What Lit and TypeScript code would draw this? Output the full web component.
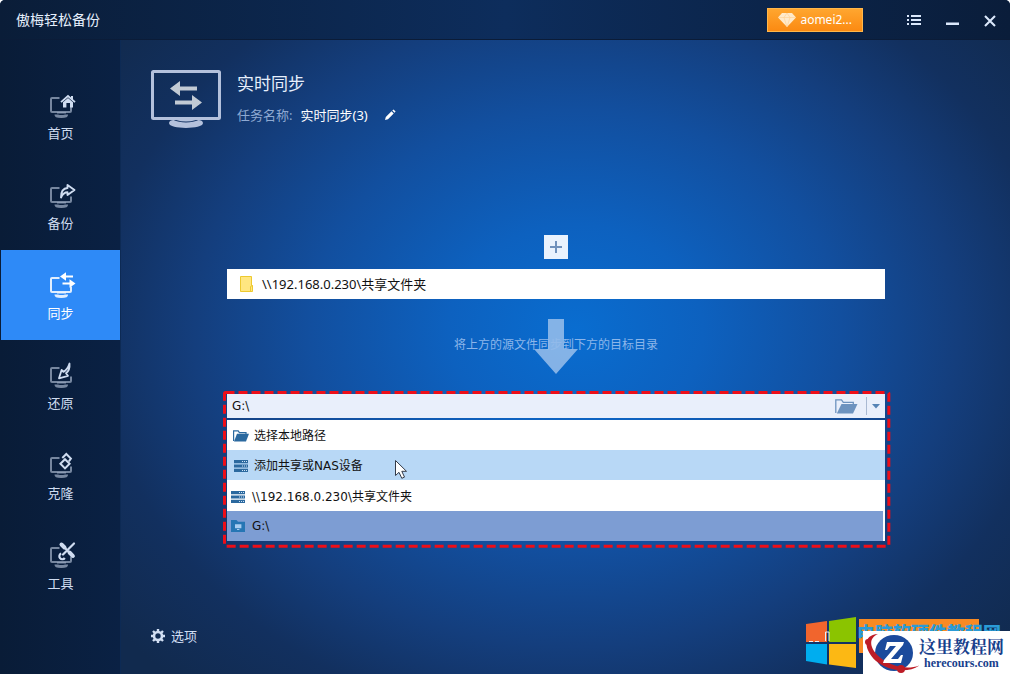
import { LitElement, html, css, svg } from "lit";
import { customElement, property, state } from "lit/decorators.js";
import { classMap } from "lit/directives/class-map.js";

const screen = svg`
  <path d="M10.500 3H3a1 1 0 0 0-1 1v12a1 1 0 0 0 1 1h18a1 1 0 0 0 1-1v-4.500" fill="none" stroke="currentColor" stroke-width="2" class="frame"/>
  <path class="frame" d="M5.500 19.500h3.500q3.500 1.200 7 0H19q.5 3.500-6.700 3.500t-6.800-3.500z" fill="currentColor"/>
  <path class="frame" d="M8 18h9" stroke="currentColor"/>`;

const glyphs: Record<string, unknown> = {
  home: svg`<path d="M12 7.200 19 1l7 6.200" fill="none" stroke="currentColor" stroke-width="1.800"/><path d="M22 1h2v4l-2-2z" fill="currentColor"/><path d="M14 7.300 19 3l5 4.300V12.500h-3V8h-3.600v4.500H14z" fill="currentColor"/>`,
  backup: svg`<path d="M12 12.500C12 6.500 14 3.300 18.500 3V0L25.500 5l-7 5V7.300c-3 0-4.800 1.500-6.500 5.200z" fill="none" stroke="currentColor" stroke-width="1.900" stroke-linejoin="round"/>`,
  sync: svg`<path d="M11 1.500l6-4.300v3.200h7v2.200h-7v3.200zM26.500 8.500l-6-4.300v3.200h-7v2.200h7v3.200z" fill="currentColor"/>`,
  restore: svg`<path d="M20.500-1.500c.5 5-.5 7.500-3.500 9.800l2 2.500-9 2.500 2.600-8.400 1.800 2c3-1.700 4.800-4.200 6.100-8.400z" fill="none" stroke="currentColor" stroke-width="1.800" stroke-linejoin="round"/>`,
  clone: svg`<path d="M16 4.200l4.600 4.600-4.600 4.600-4.600-4.600zM13.300 3 17.300-1l4.600 4.600-2 2.800" fill="none" stroke="currentColor" stroke-width="2"/>`,
  tools: svg`<path d="M12-1l12.500 12.500M25-1.500 14 9.500" fill="none" stroke="currentColor" stroke-width="2.200" stroke-linecap="round"/><path d="M12.500-.5l3 3M20.500 7.500l3.300 3.300" stroke="currentColor" stroke-width="4" stroke-linecap="round"/><path d="M15.800 13a3 3 0 1 1-3.600-4.500" fill="none" stroke="currentColor" stroke-width="2.200"/>`,
};

const server = html`<svg class="ico" width="14" height="12" viewBox="0 0 14 12" aria-hidden="true">
  <path d="M0 0h14v3.200H0zM0 4.400h14v3.200H0zM0 8.800h14V12H0z" fill="#2b699f"/>
  <path d="M8 1h1v1H8zM10 1h1v1h-1zM12 1h1v1h-1zM8 5.500h1v1H8zM10 5.500h1v1h-1zM12 5.500h1v1h-1zM8 10h1v1H8zM10 10h1v1h-1zM12 10h1v1h-1z" fill="#cfe4f7"/></svg>`;

const openFolder = html`<svg class="ico" width="16" height="12" viewBox="0 0 16 12" aria-hidden="true">
  <path d="M.6 11V.8h4.600l1.200 1.800h6.600V4" fill="none" stroke="#2b699f" stroke-width="1.200"/>
  <path d="M4 3.800h12L13 11.500H1z" fill="#2b699f"/></svg>`;

const driveFolder = html`<svg class="ico" width="14" height="12" viewBox="0 0 14 12" aria-hidden="true">
  <path d="M0 0h5.500L7 1.700h7V12H0z" fill="#2676b4"/>
  <path d="M4 4.200h6.400v4H4zM6 9h2.400v1H6z" fill="#a9cdf0"/></svg>`;

@customElement("nav-entry")
class NavEntry extends LitElement {
  @property() icon = "home";
  @property() label = "";
  @property({ type: Boolean }) active = false;

  static styles = css`
    :host { display: block; }
    .entry {
      display: flex; flex-direction: column; align-items: center; gap: 5px;
      box-sizing: border-box; width: 100%; height: 90px; padding: 25px 0 0;
      border: 0; background: none; color: #cfdcf0; cursor: pointer;
      font: 13px/20px "Noto Sans", "Noto Sans CJK SC", sans-serif;
    }
    .active { background: #2e8af7; color: #fff; }
    .art { overflow: visible; margin-left: 4px; }
    .frame { opacity: 0.55; }
    .active .frame { opacity: 0.85; }
  `;

  render() {
    return html`<button class=${classMap({ entry: true, active: this.active })} aria-current=${this.active ? "page" : "false"}>
      <svg class="art" width="27" height="23" viewBox="0 0 27 23" aria-hidden="true">${screen}${glyphs[this.icon]}</svg>
      <span>${this.label}</span>
    </button>`;
  }
}

@customElement("target-picker")
class TargetPicker extends LitElement {
  @state() private open = true;
  @state() private value = "G:\\";

  private options = [
    { text: "选择本地路径", icon: openFolder, kind: "action" },
    { text: "添加共享或NAS设备", icon: server, kind: "action hover" },
    { text: "\\\\192.168.0.230\\共享文件夹", icon: server, kind: "recent" },
    { text: "G:\\", icon: driveFolder, kind: "recent chosen" },
  ];

  static styles = css`
    :host { display: block; position: relative; padding: 3px 5px 6px 4px; color: #111; font: 12px/18px "DejaVu Sans", "Noto Sans CJK SC", sans-serif; }
    .outline { position: absolute; inset: 0; width: 100%; height: 100%; overflow: visible; pointer-events: none; }
    .box { display: flex; align-items: center; height: 24px; margin-bottom: 2px; background: #e9effb; }
    .value { flex: 1; min-width: 0; padding: 0 5px; border: 0; outline: 0; background: none; color: inherit; font: inherit; }
    .tool { display: flex; align-items: center; justify-content: center; height: 24px; padding: 0 8px; border: 0; background: none; cursor: pointer; }
    .toggle { height: 18px; padding: 0 5px; border-left: 1px solid #a9b9d2; }
    .list { margin: 0; padding: 0; background: #fff; }
    .row { display: flex; align-items: center; gap: 5px; box-sizing: border-box; width: 100%; height: 30px; padding: 1px 6px 0; border: 0; background: #fff; color: inherit; font: inherit; text-align: left; cursor: pointer; }
    .ico { flex: none; }
    .action .ico { width: 16px; }
    .hover { background: #b8d8f6; }
    .recent { gap: 7px; height: 31px; padding: 2px 4px 0; }
    .chosen { width: calc(100% - 2px); height: 30px; padding-top: 0; background: #7d9dd3; }
  `;

  render() {
    return html`
      <div class="box">
        <input class="value" aria-label="目标目录" .value=${this.value} @input=${(e: Event) => (this.value = (e.target as HTMLInputElement).value)} />
        <button class="tool" aria-label="浏览">
          <svg width="23" height="15" viewBox="0 0 23 15" aria-hidden="true">
            <path d="M.8 14V.8h5.700l1.800 2.500h10V5" fill="none" stroke="#6d93bf" stroke-width="1.300"/>
            <path d="M6.500 5H22.500L18 14.500H1.800z" fill="#6d93bf"/>
          </svg>
        </button>
        <button class="tool toggle" aria-label="展开" aria-expanded=${this.open} @click=${() => (this.open = !this.open)}>
          <svg width="8" height="5" viewBox="0 0 8 5" aria-hidden="true"><path d="M0 0h8L4 4.500z" fill="#5583b5"/></svg>
        </button>
      </div>
      ${this.open ? html`<div class="list" role="listbox" aria-label="目标目录">
        ${this.options.map((o) => html`<button class="row ${o.kind}" role="option" aria-selected=${o.kind.includes("chosen")}>${o.icon}<span>${o.text}</span></button>`)}
      </div>` : ""}
      <svg class="outline" aria-hidden="true"><rect x="1.500" y="1.500" width="99.600%" height="98.500%" rx="1" fill="none" stroke="#ee0e18" stroke-width="3" stroke-dasharray="9 4"/></svg>`;
  }
}

@customElement("app-root")
class AppRoot extends LitElement {
  private entries = [
    ["home", "首页"], ["backup", "备份"], ["sync", "同步"],
    ["restore", "还原"], ["clone", "克隆"], ["tools", "工具"],
  ];

  static styles = css`
    :host {
      display: grid; grid-template: 40px 1fr / 121px 1fr; position: relative; overflow: hidden;
      box-sizing: border-box; min-height: 100vh; color: #e6effc; border-radius: 5px 5px 0 0;
      font: 13px/20px "Noto Sans", "Noto Sans CJK SC", sans-serif;
      background: radial-gradient(ellipse 530px 440px at 57% 49%, #096dd0 0%, #0d61bf 24%, #124f9f 50%, #143e7d 72%, #12305f 90%, #112a4e 110%);
    }
    .bar { grid-column: 1 / -1; display: flex; align-items: center; padding: 0 5px 0 16px; border-bottom: 1px solid #0b1c38; box-sizing: border-box; background: linear-gradient(90deg, #0a1d38, #0d2d5c 50%, #0a1d3a); }
    .name { flex: 1; margin: 0; font-size: 14px; font-weight: 400; }
    .account { display: flex; align-items: center; gap: 4px; height: 24px; margin-right: 28px; padding: 0 10px; border: 1px solid #ffb74a; background: linear-gradient(#ffa62f, #fb8a12); color: #fff; font: 12px/18px "Noto Sans", sans-serif; cursor: pointer; }
    .win { display: grid; place-items: center; width: 30px; height: 30px; margin-left: 8px; padding: 2px 0 0; border: 0; background: none; color: #dbe8fb; cursor: pointer; }
    .side { padding: 30px 0 0 1px; background: linear-gradient(90deg, #091c37, #0a2144); border-right: 1px solid #0d2a54; }
    .main { display: flex; flex-direction: column; padding: 29px 30px 28px; min-width: 0; }
    .head { display: flex; gap: 16px; }
    .titles { padding-top: 5px; }
    .title { margin: 0 0 11px; font-size: 17px; line-height: 20px; font-weight: 400; }
    .task { display: flex; align-items: center; gap: 8px; }
    .key { color: #8ea9d2; }
    .val { color: #fff; }
    .edit { display: grid; margin-left: 8px; padding: 0; border: 0; background: none; cursor: pointer; }
    .flow { display: flex; flex-direction: column; align-items: stretch; margin: 106px 95px 0 76px; }
    .add { align-self: center; display: grid; place-items: center; width: 24px; height: 24px; margin-bottom: 10px; padding: 0; border: 0; background: #e9f2fd; cursor: pointer; }
    .source { display: flex; align-items: center; gap: 9px; height: 30px; padding: 0 13px; background: #fff; color: #111; }
    .between { display: grid; place-items: center; height: 92px; color: #8cb6ea; font-size: 12px; }
    .between > * { grid-area: 1 / 1; }
    .hint { margin: 0; white-space: nowrap; }
    .down { margin-top: 3px; opacity: 0.9; }
    .picker { margin: 0 -5px 0 -4px; }
    .options { display: flex; align-items: center; gap: 6px; align-self: flex-start; margin-top: auto; padding: 0; border: 0; background: none; color: #d2dff3; font: inherit; cursor: pointer; }
    .pointer { position: absolute; left: 394px; top: 459px; }
    .start { position: absolute; right: 31px; bottom: 21px; width: 120px; height: 34px; border: 0; background: #f88a23; }
    .logo { position: absolute; right: 153px; bottom: 5px; }
    .site { position: absolute; right: 9px; bottom: 33px; color: #2a9bd6; font: 900 18px/18px "Noto Sans CJK SC", sans-serif; white-space: nowrap; }
    .stamp { position: absolute; right: 0; bottom: 0; display: flex; align-items: center; width: 147px; height: 43px; background: #fff; color: #17408c; }
    .words { display: flex; flex-direction: column; align-items: center; font: 700 17px/20px "Noto Serif CJK SC", "Noto Sans CJK SC", sans-serif; white-space: nowrap; }
    .domain { font: 700 12px/14px "Liberation Serif", serif; }
  `;

  render() {
    return html`
      <header class="bar">
        <h1 class="name">傲梅轻松备份</h1>
        <button class="account">
          <svg width="18" height="14" viewBox="0 0 18 14" aria-hidden="true"><path d="M4 0h10l4 4.500L9 14 0 4.500z" fill="#ffeacb"/><path d="M0 4.500h18M6 4.500 9 14l3-9.500L9 0 6 4.500" fill="none" stroke="#ffcf8f" stroke-width=".6"/></svg>
          aomei2...
        </button>
        <button class="win" aria-label="菜单"><svg width="14" height="11" viewBox="0 0 14 11"><path d="M0 0h2v2H0zM4 0h10v2H4zM0 4h2v2H0zM4 4h10v2H4zM0 8h2v2H0zM4 8h10v2H4z" fill="currentColor"/></svg></button>
        <button class="win" aria-label="最小化"><svg width="14" height="11" viewBox="0 0 14 11"><path d="M1 7.500h13V10H1z" fill="currentColor"/></svg></button>
        <button class="win" aria-label="关闭"><svg width="12" height="12" viewBox="0 0 12 12"><path d="M1 1l10 10M11 1 1 11" stroke="currentColor" stroke-width="2.100"/></svg></button>
      </header>
      <nav class="side">
        ${this.entries.map(([icon, label]) => html`<nav-entry icon=${icon} label=${label} ?active=${icon === "sync"}></nav-entry>`)}
      </nav>
      <main class="main">
        <div class="head">
          <svg width="70" height="60" viewBox="0 0 70 60" aria-hidden="true">
            <rect x="1.500" y="2.500" width="67" height="47" rx="1" fill="none" stroke="#b4c1dc" stroke-width="3"/>
            <path d="M18 54c0-1.800 2.500-3 4.500-3 6 3.200 19 3.200 25 0 2 0 4.500 1.200 4.500 3 0 6.500-34 6.500-34 0z" fill="#b4c1dc"/>
            <path d="M25 51h20q-10 3-20 0z" fill="#b4c1dc"/>
            <path d="M19 19.500 29 12v5.500h17v4H29V27zM51 33.500 41 26v5.500H24v4h17V41z" fill="#c2cad4"/>
          </svg>
          <div class="titles">
            <h2 class="title">实时同步</h2>
            <div class="task"><span class="key">任务名称:</span><span class="val">实时同步(3)</span>
              <button class="edit" aria-label="编辑"><svg width="12" height="12" viewBox="0 0 12 12"><path d="M1 11l.8-3L7.500 2.300l2.200 2.200L4 10.200zM8.300 1.500 9.500.4l2.100 2.100-1.100 1.200z" fill="#fff"/></svg></button>
            </div>
          </div>
        </div>
        <section class="flow">
          <button class="add" aria-label="添加"><svg width="12" height="12" viewBox="0 0 12 12"><path d="M6 0v12M0 6h12" stroke="#6f91bc" stroke-width="2"/></svg></button>
          <div class="source">
            <svg width="13" height="16" viewBox="0 0 13 16" aria-hidden="true"><path d="M.5.5h11v9h1v6H.5z" fill="#ffe680" stroke="#edc92f"/><path d="M10.500 15.500v-5l2-1" fill="none" stroke="#edc92f"/></svg>
            <span>\\\\192.168.0.230\\共享文件夹</span>
          </div>
          <div class="between">
            <svg class="down" width="44" height="55" viewBox="0 0 44 55" aria-hidden="true"><path d="M14 0h16v30h14L22 55 0 30h14z" fill="#92bbea"/></svg>
            <p class="hint">将上方的源文件同步到下方的目标目录</p>
          </div>
          <target-picker class="picker"></target-picker>
        </section>
        <button class="options">
          <svg width="14" height="14" viewBox="0 0 14 14" aria-hidden="true"><circle cx="7" cy="7" r="4" fill="none" stroke="currentColor" stroke-width="2.600"/><path d="M7 0v3M7 11v3M0 7h3M11 7h3M2 2l2 2M10 10l2 2M2 12l2-2M10 4l2-2" stroke="currentColor" stroke-width="2.400"/></svg>
          选项
        </button>
      </main>
      <svg class="pointer" width="14" height="21" viewBox="0 0 14 21" aria-hidden="true"><path d="M1.500 1.500v15l3.500-3.200 2.800 6 2.700-1.200-2.700-5.800h4.700z" fill="#fff" stroke="#333a48"/></svg>
      <button class="start" aria-label="开始同步"></button>
      <span class="site">电脑软硬件教程网</span>
      <svg class="logo" width="51" height="52" viewBox="0 0 51 52" aria-hidden="true">
        <path d="M0 7 21 4v21H0z" fill="#f1652d"/><path d="M23 4 50 0v25H23z" fill="#8bc400"/><path d="M0 27h21v20.500L0 44z" fill="#00adef"/><path d="M23 27h27v24l-27-3.500z" fill="#fcb814"/>
        <path d="M19.500 15h3.500v9M19.500 15v9M3 24.500h4M9 24.500h4" stroke="#e9eef5" stroke-width="1" fill="none"/>
      </svg>
      <div class="stamp">
        <svg width="56" height="43" viewBox="0 0 56 43" aria-hidden="true">
          <ellipse cx="31" cy="22" rx="19" ry="18" fill="#1b4a9c"/>
          <path d="M15 3C-1 4 1 19 13 30c12 10 33 13 44 4-11 5-27 2-38-6C7 19 4 8 15 3z" fill="#bd1c26"/>
          <circle cx="5" cy="11" r="3" fill="#bd1c26"/><circle cx="38" cy="38" r="4" fill="#bd1c26"/>
          <path d="M24 11h17l-1 3-12 14h7l3-4h2l-2 8H20l1-3 12-14h-6l-3 4h-2z" fill="#fff"/>
        </svg>
        <div class="words"><span>这里教程网</span><span class="domain">herecours.com</span></div>
      </div>`;
  }
}
